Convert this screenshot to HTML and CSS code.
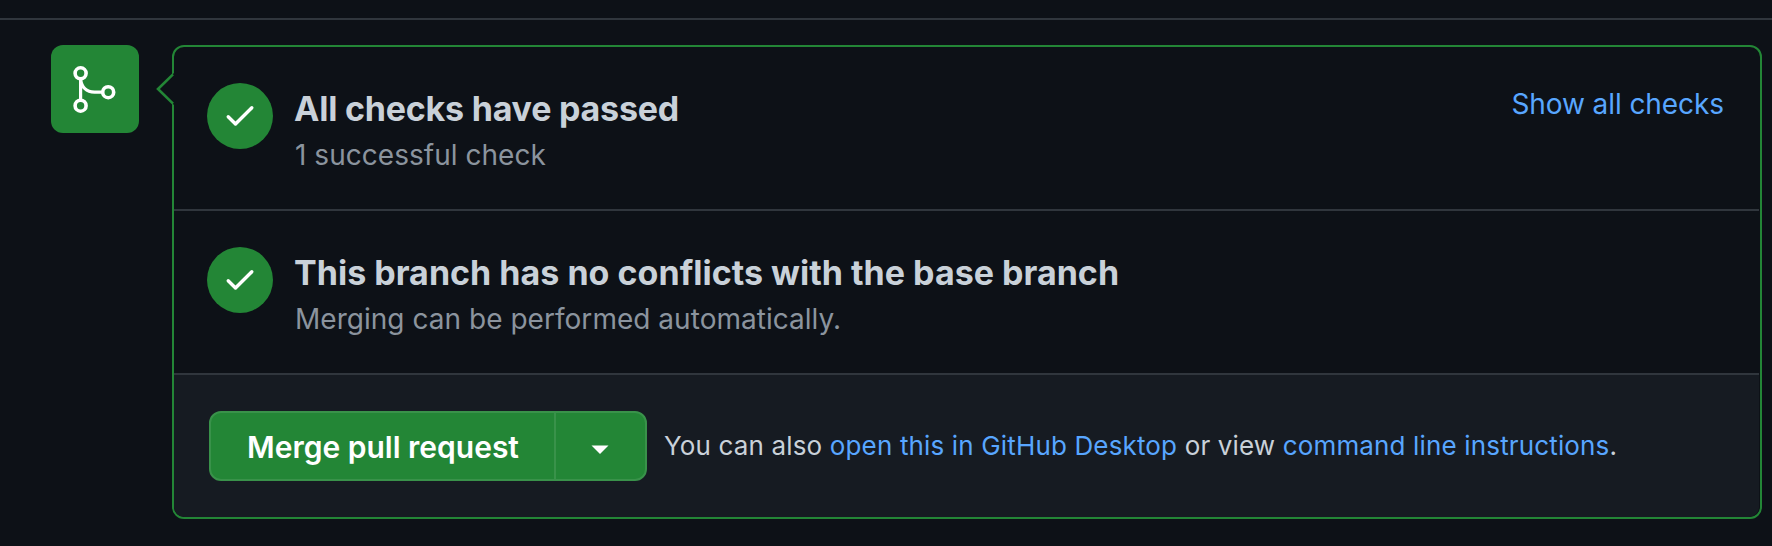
FILE: index.html
```html
<!DOCTYPE html>
<html lang="en">
<head>
<meta charset="utf-8">
<title>Merge pull request</title>
<link rel="stylesheet" href="styles.css">
</head>
<body>
<main class="merge">
  <div class="badge">
    <svg class="badge-icon" viewBox="0 0 88 88" fill="none" stroke="currentColor">
      <circle cx="29.6" cy="28.3" r="5.5" stroke-width="3.6"/>
      <circle cx="29.6" cy="60.7" r="5.5" stroke-width="3.6"/>
      <circle cx="57.2" cy="47.2" r="5.500" stroke-width="3.6"/>
      <path d="M29.6 34V55M29.6 34C30.5 42 35.500 47.200 43.500 47.200H52" stroke-width="3.2"/>
    </svg>
  </div>
  <section class="box">
    <svg class="caret" viewBox="0 0 18 32"><path class="caret-fill" d="M18 0L2 16L18 32Z"/><path class="caret-line" d="M17 1.400L2 16L17 30.600"/></svg>
    <div class="row">
      <div class="status"><svg class="check" viewBox="0 0 16 16"><path d="M13.78 4.22a.75.75 0 010 1.06l-7.25 7.25a.75.75 0 01-1.06 0L2.220 9.280a.75.75 0 011.060-1.060L6 10.940l6.720-6.720a.75.75 0 011.060 0z"/></svg></div>
      <div class="text">
        <h3 class="title">All checks have passed</h3>
        <p class="sub">1 successful check</p>
      </div>
      <a class="show link">Show all checks</a>
    </div>
    <div class="row">
      <div class="status"><svg class="check" viewBox="0 0 16 16"><path d="M13.78 4.22a.75.75 0 010 1.06l-7.25 7.25a.75.75 0 01-1.06 0L2.220 9.280a.75.75 0 011.060-1.060L6 10.940l6.720-6.720a.75.75 0 011.060 0z"/></svg></div>
      <div class="text">
        <h3 class="title title-wide">This branch has no conflicts with the base branch</h3>
        <p class="sub">Merging can be performed automatically.</p>
      </div>
    </div>
    <footer class="footer">
      <div class="group">
        <button class="btn-main">Merge pull request</button>
        <button class="btn-drop" aria-label="Select merge method"><svg class="drop-icon" viewBox="0 0 18 9"><path d="M.5 .5H17.500L9 9Z"/></svg></button>
      </div>
      <p class="note">You can also <a class="link">open this in GitHub Desktop</a> or view <a class="link">command line instructions</a>.</p>
    </footer>
  </section>
</main>
</body>
</html>
```
FILE: styles.css
```css
* { box-sizing: border-box; }
body { margin: 0; height: 546px; padding-top: 18px; background: #0d1117; color: #c9d1d9; font-family: Inter, "Liberation Sans", sans-serif; overflow: hidden; }
h3, p { margin: 0; font-weight: 400; white-space: nowrap; }
.merge { display: flex; align-items: flex-start; gap: 33px; border-top: 2px solid #30363d; padding: 25px 10px 0 51px; }
.badge { width: 88px; height: 88px; flex: none; border-radius: 12px; background: #238636; color: #fff; }
.badge-icon { display: block; width: 88px; height: 88px; }
.box { position: relative; flex: 1; height: 474px; border: 2px solid #238636; border-radius: 12px; }
.caret { position: absolute; left: -18px; top: 26px; width: 18px; height: 32px; overflow: visible; }
.caret-fill { fill: #0d1117; }
.caret-line { fill: none; stroke: #238636; stroke-width: 2.6; }
.row { display: flex; height: 164px; margin-right: 1px; padding: 36px 35px 0 33px; border-bottom: 2px solid #30363d; }
.status { display: flex; align-items: center; justify-content: center; flex: none; width: 66px; height: 66px; border-radius: 50%; background: #238636; }
.check { width: 36px; height: 36px; margin-bottom: 2px; fill: #fff; }
.text { flex: 1; padding: 5px 0 0 21px; }
.title { height: 44px; line-height: 42px; font-size: 34px; font-weight: 700; letter-spacing: -.22px; }
.title-wide { letter-spacing: .02px; }
.sub { padding-left: 1px; line-height: 46px; font-size: 28px; letter-spacing: .03px; color: #8b949e; }
.link { color: #58a6ff; }
.show { line-height: 42px; font-size: 28px; letter-spacing: -.08px; }
.footer { display: flex; gap: 17px; height: 142px; margin: 0 1px 1px 0; padding: 36px 0 0 35px; background: #161b22; border-radius: 0 0 10px 10px; }
.group { display: flex; width: 438px; height: 70px; border: 2px solid #39924a; border-radius: 12px; background: #238636; overflow: hidden; }
.group button { border: 0; padding: 0; background: none; color: #fff; font: 600 30px/66px Inter, "Liberation Sans", sans-serif; white-space: nowrap; }
.group .btn-main { flex: 1; padding: 1px 0 0 36px; line-height: 67px; text-align: left; }
.group .btn-drop { display: flex; align-items: center; justify-content: center; width: 91px; border-left: 2px solid #39924a; }
.drop-icon { width: 18px; height: 9px; margin: 6px 1px 0 0; fill: #fff; }
.note { line-height: 70px; font-size: 26px; letter-spacing: .15px; }
```
